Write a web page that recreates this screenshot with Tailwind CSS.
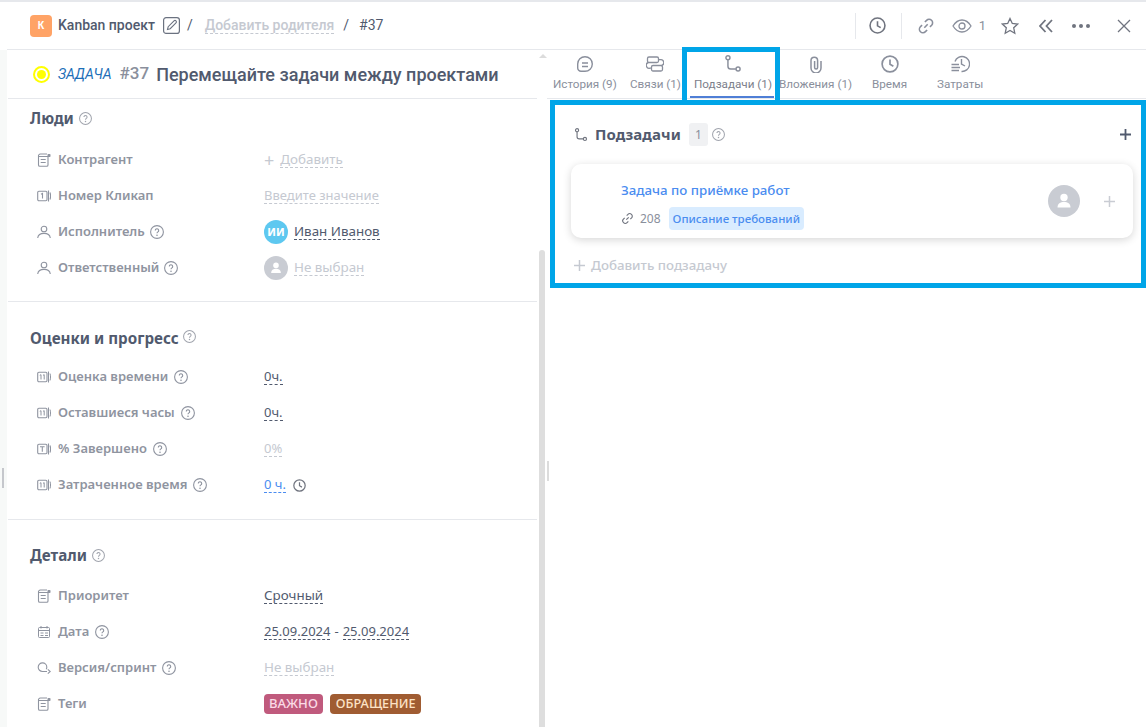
<!DOCTYPE html>
<html lang="ru">
<head>
    <meta charset="UTF-8">
    <title>Kanban проект #37</title>
    <script src="https://cdn.jsdelivr.net/npm/@tailwindcss/browser@4"></script>
</head>
<body class="bg-white w-[1146px] h-[727px] overflow-hidden font-['Noto_Sans',sans-serif] text-[#515a6e]">
<svg class="hidden">
    <symbol id="help" viewBox="0 0 14 14"><circle cx="7" cy="7" r="6.400" fill="none" stroke="currentColor" stroke-width="1.100"/><path d="M5.300 5.500a1.700 1.700 0 1 1 2.600 1.400c-.6.400-.9.700-.9 1.400" fill="none" stroke="currentColor" stroke-width="1.100"/><circle cx="7" cy="10.300" r=".8" fill="currentColor"/></symbol>
    <symbol id="list" viewBox="0 0 14 14"><path d="M1.500 3.500h9.500v8.500a1.300 1.300 0 0 1-1.300 1.300H2.800A1.300 1.300 0 0 1 1.500 12zM1.500 3.500A2 2 0 0 1 3.500 1h6.500M3.700 6.500h5M3.700 9.500h5" fill="none" stroke="currentColor" stroke-width="1.100"/><rect x="10.500" y="1" width="3" height="3" rx=".8" fill="currentColor"/></symbol>
    <symbol id="num1" viewBox="0 0 14 14"><rect x=".7" y="2.300" width="9.300" height="9.400" rx="1.200" fill="none" stroke="currentColor" stroke-width="1.100"/><path d="M11.500 1.500v11M13 3.500c.7 2 .7 5 0 7M4 5.300l1.500-.8v5" fill="none" stroke="currentColor" stroke-width="1.100"/></symbol>
    <symbol id="num11" viewBox="0 0 14 14"><rect x=".7" y="2.300" width="9.300" height="9.400" rx="1.200" fill="none" stroke="currentColor" stroke-width="1.100"/><path d="M11.500 1.500v11M13 3.500c.7 2 .7 5 0 7M2.800 5.300l1.200-.6v4.800M6 5.300l1.200-.6v4.800" fill="none" stroke="currentColor" stroke-width="1"/></symbol>
    <symbol id="numT" viewBox="0 0 14 14"><rect x=".7" y="2.300" width="9.300" height="9.400" rx="1.200" fill="none" stroke="currentColor" stroke-width="1.100"/><path d="M11.500 1.500v11M13 3.500c.7 2 .7 5 0 7M3 4.800h4.600M5.300 4.800v4.900" fill="none" stroke="currentColor" stroke-width="1.100"/></symbol>
    <symbol id="user" viewBox="0 0 14 14"><circle cx="7" cy="4" r="2.800" fill="none" stroke="currentColor" stroke-width="1.100"/><path d="M.7 13c.4-3 2.900-4.600 6.300-4.600s5.900 1.600 6.300 4.600" fill="none" stroke="currentColor" stroke-width="1.100"/></symbol>
    <symbol id="avatar" viewBox="0 0 32 32"><circle cx="16" cy="16" r="16" fill="#c9ccd3"/><circle cx="16" cy="12.500" r="3.700" fill="#fff"/><path d="M9.500 22.500c0-3.800 2.800-5.500 6.500-5.500s6.500 1.700 6.500 5.500z" fill="#fff"/></symbol>
    <symbol id="branch" viewBox="0 0 16 16"><circle cx="3.500" cy="2.500" r="1.800" fill="none" stroke="currentColor" stroke-width="1.300"/><circle cx="12.500" cy="12.500" r="1.800" fill="none" stroke="currentColor" stroke-width="1.300"/><path d="M3.500 4.500v5.500a2.500 2.500 0 0 0 2.500 2.500h4.500" fill="none" stroke="currentColor" stroke-width="1.300"/></symbol>
    <symbol id="clock" viewBox="0 0 16 16"><circle cx="8" cy="8" r="7" fill="none" stroke="currentColor" stroke-width="1.500"/><path d="M8 4v4.300l3 1.700" fill="none" stroke="currentColor" stroke-width="1.500"/></symbol>
    <symbol id="link" viewBox="0 0 16 16"><path d="M6.500 9.500l3-3M7 4.500l1.500-1.500a3 3 0 0 1 4.500 4.300l-1.500 1.500M9 11.500l-1.500 1.500a3 3 0 0 1-4.500-4.300l1.500-1.500" fill="none" stroke="currentColor" stroke-width="1.400"/></symbol>
</svg>

<div class="h-[2px] bg-[#e6e8ec]"></div>
<header class="h-[48px] flex items-center border-b border-[#e6e8ec] ml-[7px] pl-[23px] pr-[15px] font-['Roboto',sans-serif] text-[14px]">
    <span class="w-[22px] h-[22px] rounded-[4px] bg-[#ffa366] text-white text-[10px] font-bold flex items-center justify-center">К</span>
    <span class="ml-[6px] font-medium text-[#515a6e]">Kanban проект</span>
    <svg class="ml-[8px] w-[17px] h-[17px] text-[#6b7280]" viewBox="0 0 17 17"><rect x=".6" y=".6" width="15.800" height="15.800" rx="2.500" fill="none" stroke="currentColor" stroke-width="1.200"/><path d="M4.500 12.500l.7-2.800 5.800-5.800a1.300 1.300 0 0 1 2 2l-5.800 5.800z" fill="none" stroke="currentColor" stroke-width="1.100"/></svg>
    <span class="ml-[7px]">/</span>
    <span class="ml-[12px] font-medium text-[#c5c9d1] border-b border-dashed border-[#c5c9d1] leading-[15px]">Добавить родителя</span>
    <span class="ml-[9px]">/</span>
    <span class="ml-[10px]">#37</span>
    <div class="ml-auto flex items-center text-[#8a8f9c]">
        <span class="w-px h-[26px] bg-[#e6e8ec]"></span>
        <svg class="ml-[13px] w-[17px] h-[17px] text-[#70747f]"><use href="#clock"/></svg>
        <span class="ml-[15px] w-px h-[26px] bg-[#e6e8ec]"></span>
        <svg class="ml-[15px] w-[18px] h-[18px]"><use href="#link"/></svg>
        <svg class="ml-[17px] w-[20px] h-[14px]" viewBox="0 0 20 14"><path d="M1 7c2.500-4 5.500-6 9-6s6.500 2 9 6c-2.500 4-5.500 6-9 6s-6.500-2-9-6z" fill="none" stroke="currentColor" stroke-width="1.300"/><circle cx="10" cy="7" r="3" fill="none" stroke="currentColor" stroke-width="1.300"/></svg>
        <span class="ml-[7px] text-[13px]">1</span>
        <svg class="ml-[15px] w-[18px] h-[18px] text-[#70747f]" viewBox="0 0 18 18"><path d="M9 1.500l2.300 5 5.400.6-4 3.700 1.100 5.400L9 13.500l-4.800 2.700 1.100-5.400-4-3.700 5.400-.6z" fill="none" stroke="currentColor" stroke-width="1.300"/></svg>
        <svg class="ml-[20px] w-[14px] h-[14px] text-[#70747f]" viewBox="0 0 14 14"><path d="M6.500 1L1 7l5.500 6M13 1L7.500 7l5.500 6" fill="none" stroke="currentColor" stroke-width="1.800"/></svg>
        <svg class="ml-[19px] w-[18px] h-[4px] text-[#70747f]" viewBox="0 0 18 4"><circle cx="2" cy="2" r="2" fill="currentColor"/><circle cx="9" cy="2" r="2" fill="currentColor"/><circle cx="16" cy="2" r="2" fill="currentColor"/></svg>
        <svg class="ml-[27px] w-[14px] h-[14px] text-[#70747f]" viewBox="0 0 14 14"><path d="M1 1l12 12M13 1L1 13" fill="none" stroke="currentColor" stroke-width="1.300"/></svg>
    </div>
</header>

<div class="flex h-[677px]">
    <aside class="w-[547px] shrink-0 relative">
        <div class="absolute left-0 top-0 bottom-0 w-[7px] bg-[#f7f9f8]"></div>
        <div class="absolute left-[2px] top-[418px] w-[2px] h-[20px] bg-[#c5c7cc]"></div>
        <div class="absolute left-[539px] top-[4px] w-0 h-0 border-x-[4px] border-x-transparent border-b-[4px] border-b-[#dcdcdc]"></div>
        <div class="absolute left-[539px] top-[200px] bottom-0 w-[6px] rounded-t-[3px] bg-[#dedede]"></div>
        <div class="ml-[8px] mr-[10px]">
            <div class="h-[49px] flex items-center pl-[25px] border-b border-[#e6e8ec] font-['Roboto',sans-serif]">
                <span class="w-[17px] h-[17px] rounded-full border-2 border-[#ffff00] flex items-center justify-center"><span class="w-[9px] h-[9px] rounded-full bg-[#ffff00] block"></span></span>
                <span class="ml-[8px] italic text-[14px] tracking-[-0.1px] text-[#1d6fb8]">ЗАДАЧА</span>
                <span class="ml-[8px] text-[17px] font-medium text-[#8a8f9c]">#37</span>
                <span class="ml-[7px] text-[18px] font-medium text-[#515a6e]">Перемещайте задачи между проектами</span>
            </div>

            <section class="h-[203px] pt-[8px] pl-[22px] border-b border-[#e6e8ec]">
                <h3 class="flex items-center h-[22px] text-[15.2px] font-bold text-[#515a6e]">Люди<svg class="ml-[5px] w-[13px] h-[13px] text-[#a0a4ad]"><use href="#help"/></svg></h3>
                <div class="mt-[13px] pl-[7px] flex flex-col text-[13px]">
                    <div class="h-[36px] flex items-center">
                        <div class="w-[227px] flex items-center font-semibold text-[#8f94a0]"><svg class="w-[14px] h-[14px] mr-[7px]"><use href="#list"/></svg>Контрагент</div>
                        <span class="text-[#c5c9d1] text-[18px] leading-none mr-[6px]">+</span><span class="text-[13.4px] text-[#c5c9d1] border-b border-dashed border-[#c5c9d1] leading-[15px]">Добавить</span>
                    </div>
                    <div class="h-[36px] flex items-center">
                        <div class="w-[227px] flex items-center font-semibold text-[#8f94a0]"><svg class="w-[14px] h-[14px] mr-[7px]"><use href="#num1"/></svg>Номер Кликап</div>
                        <span class="text-[#c5c9d1] border-b border-dashed border-[#c5c9d1] leading-[15px]">Введите значение</span>
                    </div>
                    <div class="h-[36px] flex items-center">
                        <div class="w-[227px] flex items-center font-semibold text-[#8f94a0]"><svg class="w-[14px] h-[14px] mr-[7px]"><use href="#user"/></svg>Исполнитель<svg class="ml-[5px] w-[14px] h-[14px]"><use href="#help"/></svg></div>
                        <span class="w-[24px] h-[24px] rounded-full bg-[#5ec8f0] text-white text-[11px] font-bold flex items-center justify-center mr-[6px]">ИИ</span><span class="text-[13.4px] text-[#515a6e] border-b border-dashed border-[#515a6e] leading-[15px]">Иван Иванов</span>
                    </div>
                    <div class="h-[36px] flex items-center">
                        <div class="w-[227px] flex items-center font-semibold text-[#8f94a0]"><svg class="w-[14px] h-[14px] mr-[7px]"><use href="#user"/></svg>Ответственный<svg class="ml-[5px] w-[14px] h-[14px]"><use href="#help"/></svg></div>
                        <svg class="w-[24px] h-[24px] mr-[6px]"><use href="#avatar"/></svg><span class="text-[13.4px] text-[#c5c9d1] border-b border-dashed border-[#c5c9d1] leading-[15px]">Не выбран</span>
                    </div>
                </div>
            </section>

            <section class="h-[218px] pt-[25px] pl-[22px] border-b border-[#e6e8ec]">
                <h3 class="flex items-center h-[22px] text-[15.2px] font-bold text-[#515a6e]">Оценки и прогресс<svg class="ml-[4px] -mt-[3px] w-[13px] h-[13px] text-[#a0a4ad]"><use href="#help"/></svg></h3>
                <div class="mt-[10px] pl-[7px] flex flex-col text-[13px]">
                    <div class="h-[36px] flex items-center">
                        <div class="w-[227px] flex items-center font-semibold text-[#8f94a0]"><svg class="w-[14px] h-[14px] mr-[7px]"><use href="#num11"/></svg>Оценка времени<svg class="ml-[6px] w-[14px] h-[14px]"><use href="#help"/></svg></div>
                        <span class="text-[#515a6e] border-b border-dashed border-[#515a6e] leading-[15px]">0ч.</span>
                    </div>
                    <div class="h-[36px] flex items-center">
                        <div class="w-[227px] flex items-center font-semibold text-[#8f94a0]"><svg class="w-[14px] h-[14px] mr-[7px]"><use href="#num11"/></svg>Оставшиеся часы<svg class="ml-[6px] w-[14px] h-[14px]"><use href="#help"/></svg></div>
                        <span class="text-[#515a6e] border-b border-dashed border-[#515a6e] leading-[15px]">0ч.</span>
                    </div>
                    <div class="h-[36px] flex items-center">
                        <div class="w-[227px] flex items-center font-semibold text-[#8f94a0]"><svg class="w-[14px] h-[14px] mr-[7px]"><use href="#numT"/></svg>% Завершено<svg class="ml-[6px] w-[14px] h-[14px]"><use href="#help"/></svg></div>
                        <span class="text-[#c5c9d1] border-b border-dashed border-[#c5c9d1] leading-[15px]">0%</span>
                    </div>
                    <div class="h-[36px] flex items-center">
                        <div class="w-[227px] flex items-center font-semibold text-[#8f94a0]"><svg class="w-[14px] h-[14px] mr-[7px]"><use href="#num11"/></svg>Затраченное время<svg class="ml-[6px] w-[14px] h-[14px]"><use href="#help"/></svg></div>
                        <span class="text-[#4a8cf0] border-b border-dashed border-[#4a8cf0] leading-[15px]">0 ч.</span><svg class="ml-[7px] w-[13px] h-[13px] text-[#70747f]"><use href="#clock"/></svg>
                    </div>
                </div>
            </section>

            <section class="pt-[24px] pl-[22px]">
                <h3 class="flex items-center h-[22px] text-[15.2px] font-bold text-[#515a6e]">Детали<svg class="ml-[5px] w-[13px] h-[13px] text-[#a0a4ad]"><use href="#help"/></svg></h3>
                <div class="mt-[12px] pl-[7px] flex flex-col text-[13px]">
                    <div class="h-[36px] flex items-center">
                        <div class="w-[227px] flex items-center font-semibold text-[#8f94a0]"><svg class="w-[14px] h-[14px] mr-[7px]"><use href="#list"/></svg>Приоритет</div>
                        <span class="text-[13.4px] text-[#515a6e] border-b border-dashed border-[#515a6e] leading-[15px]">Срочный</span>
                    </div>
                    <div class="h-[36px] flex items-center">
                        <div class="w-[227px] flex items-center font-semibold text-[#8f94a0]"><svg class="w-[14px] h-[14px] mr-[7px]" viewBox="0 0 14 14"><rect x="1.500" y="2.500" width="11" height="10" rx="1" fill="none" stroke="currentColor"/><path d="M1.500 5.500h11M4 1v2.500M10 1v2.500M3.500 8h3M8 8h3M3.500 10.500h3M8 10.500h3" fill="none" stroke="currentColor"/></svg>Дата<svg class="ml-[6px] w-[14px] h-[14px]"><use href="#help"/></svg></div>
                        <span class="text-[#515a6e] border-b border-dashed border-[#515a6e] leading-[15px]">25.09.2024</span><span class="mx-[4px]">-</span><span class="text-[#515a6e] border-b border-dashed border-[#515a6e] leading-[15px]">25.09.2024</span>
                    </div>
                    <div class="h-[36px] flex items-center">
                        <div class="w-[227px] flex items-center font-semibold text-[#8f94a0]"><svg class="w-[14px] h-[14px] mr-[7px]" viewBox="0 0 14 14"><path d="M10 10.500H5.500a4.300 4.300 0 1 1 4.300-4.300c0 .9-.2 1.500-.6 2.100" fill="none" stroke="currentColor" stroke-width="1.100"/><path d="M10.800 8.300l2.500 2.200-2.500 2.200" fill="none" stroke="currentColor" stroke-width="1.100"/></svg>Версия/спринт<svg class="ml-[6px] w-[14px] h-[14px]"><use href="#help"/></svg></div>
                        <span class="text-[13.4px] text-[#c5c9d1] border-b border-dashed border-[#c5c9d1] leading-[15px]">Не выбран</span>
                    </div>
                    <div class="h-[36px] flex items-center">
                        <div class="w-[227px] flex items-center font-semibold text-[#8f94a0]"><svg class="w-[14px] h-[14px] mr-[7px]"><use href="#list"/></svg>Теги</div>
                        <span class="h-[20px] px-[5px] rounded-[4px] bg-[#c05a7d] text-[#fbdbe6] text-[13px] font-medium flex items-center">ВАЖНО</span>
                        <span class="ml-[7px] h-[20px] px-[6px] rounded-[4px] bg-[#a05c32] text-[#fde3c6] text-[12.7px] font-medium flex items-center">ОБРАЩЕНИЕ</span>
                    </div>
                </div>
            </section>
        </div>
    </aside>

    <main class="flex-1 relative">
        <div class="absolute left-0 top-[411px] w-[2px] h-[20px] bg-[#dcdcdc]"></div>
        <nav class="h-[49px] border-b border-[#e6e8ec] font-['Roboto',sans-serif] text-[11.7px] whitespace-nowrap text-[#8a8f9c]">
            <div class="absolute left-[6px] top-[5px] flex flex-col items-center gap-[3px]"><svg class="w-[18px] h-[18px]" viewBox="0 0 18 18"><path d="M9 1.700a7.300 7.300 0 0 1 7.300 7.300c0 4-3.300 7.300-7.300 7.300H5a3.300 3.300 0 0 1-3.300-3.300V9A7.300 7.300 0 0 1 9 1.700zM6 8h6M6 11.500h6" fill="none" stroke="currentColor" stroke-width="1.400"/></svg>История (9)</div>
            <div class="absolute left-[83px] top-[5px] flex flex-col items-center gap-[3px]"><svg class="w-[18px] h-[18px]" viewBox="0 0 18 18"><rect x="1.500" y="2" width="11" height="5.500" rx="1.500" fill="none" stroke="currentColor" stroke-width="1.300"/><rect x="5.500" y="10.500" width="11" height="5.500" rx="1.500" fill="none" stroke="currentColor" stroke-width="1.300"/><path d="M12.500 4.700h1.500a2 2 0 0 1 1.500 5.800M5.500 13.200H4a2 2 0 0 1-1.500-5.700" fill="none" stroke="currentColor" stroke-width="1.300"/></svg>Связи (1)</div>
            <div class="absolute left-[147px] top-[5px] flex flex-col items-center gap-[3px] text-[#7c808b]"><svg class="w-[18px] h-[18px] text-[#8a8f9c]"><use href="#branch"/></svg>Подзадачи (1)</div>
            <div class="absolute left-[143px] top-[46px] w-[84px] h-[2px] bg-[#4f7fd6]"></div>
            <div class="absolute left-[232px] top-[5px] flex flex-col items-center gap-[3px]"><svg class="w-[18px] h-[18px]" viewBox="0 0 18 18"><path d="M14 6v7a5 5 0 0 1-10 0V5.500a3.300 3.300 0 0 1 6.600 0v7a1.500 1.500 0 0 1-3 0V6" fill="none" stroke="currentColor" stroke-width="1.500"/></svg>Вложения (1)</div>
            <div class="absolute left-[325px] top-[5px] flex flex-col items-center gap-[3px]"><svg class="w-[18px] h-[18px]"><use href="#clock"/></svg>Время</div>
            <div class="absolute left-[390px] top-[5px] flex flex-col items-center gap-[3px]"><svg class="w-[20px] h-[18px]" viewBox="0 0 20 18"><path d="M5 6.500A7.500 7.500 0 1 1 11.500 16.500M11.500 4v5l3.500 2" fill="none" stroke="currentColor" stroke-width="1.400"/><path d="M1.500 9.500h7.500M1.500 12.500h8.500M1.500 15.500h7.500" fill="none" stroke="currentColor" stroke-width="1.400"/></svg>Затраты</div>
        </nav>

        <!-- highlight frames from the screenshot -->
        <div class="absolute left-[135px] top-[-3px] w-[98px] h-[53px] border-x-[5px] border-t-[5px] border-[#00a5e8] pointer-events-none"></div>
        <div class="absolute left-[3px] top-[50px] w-[596px] h-[188px] border-[5px] border-[#00a5e8] pointer-events-none"></div>

        <div class="absolute left-[27px] top-[73px] right-[15px] flex items-center h-[23px]">
            <svg class="w-[14px] h-[14px] text-[#70747f]"><use href="#branch"/></svg>
            <span class="ml-[7px] text-[15px] font-bold tracking-[0.1px] text-[#515a6e]">Подзадачи</span>
            <span class="ml-[8px] w-[19px] h-[23px] rounded-[3px] bg-[#f0f1f3] text-[#8a8f9c] text-[12px] flex items-center justify-center">1</span>
            <svg class="ml-[4px] w-[13px] h-[13px] text-[#a0a4ad]"><use href="#help"/></svg>
            <svg class="ml-auto w-[11px] h-[11px] text-[#515a6e]" viewBox="0 0 11 11"><path d="M5.500 0v11M0 5.500h11" stroke="currentColor" stroke-width="1.800"/></svg>
        </div>

        <div class="absolute left-[24px] top-[114px] w-[562px] h-[74px] rounded-[10px] bg-white shadow-[0_2px_8px_rgba(0,0,0,0.16)] pl-[50px] pt-[17px]">
            <div class="text-[13.3px] font-medium text-[#4a8cf0] leading-[19px]">Задача по приёмке работ</div>
            <div class="mt-[7px] flex items-center">
                <svg class="w-[13px] h-[13px] text-[#70747f]"><use href="#link"/></svg>
                <span class="ml-[6px] text-[12px] text-[#8a8f9c]">208</span>
                <span class="ml-[8px] h-[23px] px-[4px] rounded-[4px] bg-[#d9ecff] text-[#4a8cf0] text-[11.5px] font-medium flex items-center">Описание требований</span>
            </div>
            <svg class="absolute left-[477px] top-[21px] w-[32px] h-[32px]"><use href="#avatar"/></svg>
            <svg class="absolute left-[533px] top-[32px] w-[11px] h-[11px] text-[#c9ccd3]" viewBox="0 0 11 11"><path d="M5.500 0v11M0 5.500h11" stroke="currentColor" stroke-width="1.500"/></svg>
        </div>

        <div class="absolute left-[27px] top-[206px] flex items-center text-[13.3px] font-medium text-[#c5c9d1]">
            <svg class="w-[11px] h-[11px] mr-[6px]" viewBox="0 0 11 11"><path d="M5.500 0v11M0 5.500h11" stroke="currentColor" stroke-width="1.500"/></svg>Добавить подзадачу
        </div>
    </main>
</div>
</body>
</html>
